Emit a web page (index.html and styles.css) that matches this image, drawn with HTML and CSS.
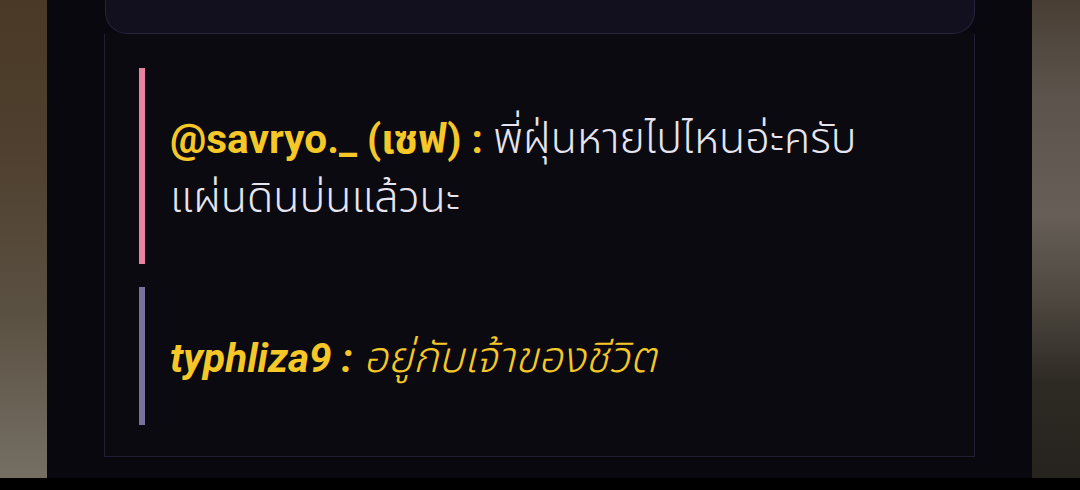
FILE: index.html
```html
<!DOCTYPE html>
<html lang="th">
<head>
    <meta charset="utf-8"/>
    <title>ความคิดเห็น</title>
    <link rel="stylesheet" href="styles.css">
</head>
<body>
<div class="screen">
    <div class="side side_left"></div>
    <div class="panel">
        <div class="top_card"></div>
        <div class="thread">
            <div class="reply reply_pink">
                <p><span class="name">@savryo._ (เซฟ) :</span> พี่ฝุ่นหายไปไหนอ่ะครับ <span class="nowrap">แผ่นดินบ่นแล้วนะ</span></p>
            </div>
            <div class="reply reply_grey">
                <p class="italic"><span class="name">typhliza9 :</span> <span class="gold">อยู่กับเจ้าของชีวิต</span></p>
            </div>
        </div>
    </div>
    <div class="side side_right"></div>
</div>
</body>
</html>
```

FILE: styles.css
```css
*{ padding:0; margin:0; box-sizing:border-box; }
body{ background:#000; font-family:Roboto, "Noto Sans", "Noto Sans Thai", sans-serif; }
.screen{ display:flex; height:478px; }
.side{ width:47px; }
.side_left{ background:linear-gradient(180deg, #4a3926 0%, #4f3f2e 30%, #5a5042 65%, #756f63 100%); }
.side_right{ width:48px; background:linear-gradient(180deg, #483e34 0%, #5c544c 20%, #675f57 45%, #4e4840 62%, #2e2a24 80%, #26221d 100%); }
.panel{ flex:1; background:#09080f; padding:0 57px; display:flex; flex-direction:column; }
.top_card{ height:34px; margin-left:1px; background:#12101f; border:1px solid #26233c; border-top:none; border-radius:0 0 22px 22px; }
.thread{ height:423px; border:1px solid #201e33; border-top:none; background:#0a0a10; padding:34px 34px 0; display:flex; flex-direction:column; gap:23px; }
.reply{ padding:41px 20px 38px 25px; border-left:6px solid; font-size:43px; font-weight:300; line-height:58px; color:#e6e4ee; }
.reply p{ line-height:58px; }
.reply_pink{ border-color:#e8829f; }
.reply_grey{ border-color:#77729a; }
.name{ color:#f5c828; font-weight:bold; font-size:40.5px; }
.nowrap{ white-space:nowrap; }
.italic{ font-style:italic; }
.gold{ color:#f5c828; }
```
